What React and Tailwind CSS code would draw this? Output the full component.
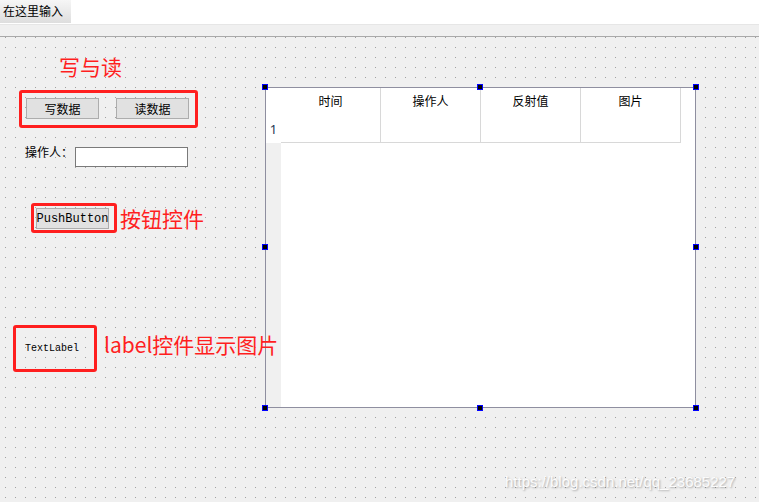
import React from "react";

const cjk = "font-['Microsoft_YaHei','Noto_Sans_CJK_SC',sans-serif]";
const mono = "font-['Liberation_Mono','Noto_Sans_CJK_SC',monospace]";

const Handle = ({ className }) => (
  <div className={`absolute w-[6px] h-[6px] bg-black border border-[#0000ff] ${className}`} />
);

const QtButton = ({ children, className = "" }) => (
  <div
    className={`w-[73px] h-[21px] shrink-0 flex items-center justify-center bg-[#e1e1e1] border border-[#adadad] text-[12px] text-black ${className}`}
  >
    {children}
  </div>
);

const columns = ["时间", "操作人", "反射值", "图片"];

export default function App() {
  return (
    <div className={`w-[759px] h-[502px] flex flex-col bg-[#f0f0f0] overflow-hidden ${cjk}`}>
      {/* menu bar */}
      <div className="h-[24px] shrink-0 bg-white flex">
        <div className="w-[71px] h-[23px] bg-gradient-to-b from-[#f6f6f6] to-[#dedede] text-[12px] leading-[22px] pl-[3px] text-black">
          在这里输入
        </div>
      </div>
      {/* toolbar strip */}
      <div className="h-[13px] shrink-0 bg-[#f0f0f0] border-t border-t-[#e6e6e6] border-b border-b-[#a9a9a9] box-border" />

      {/* form canvas */}
      <div className="relative flex-1 flex items-start bg-[#f0f0f0] bg-[image:conic-gradient(from_270deg_at_1px_1px,#a0a0a0_90deg,transparent_0)] bg-[size:10px_10px] bg-[position:5px_0px]">
        {/* left column */}
        <div className="relative z-10 w-[265px] shrink-0 flex flex-col items-start">
          <div className="mt-[19px] ml-[59px] text-[21px] leading-[21px] text-[#ff1f1f]">写与读</div>

          <div className="mt-[13px] ml-[19px] w-[179px] h-[38px] border-[3px] border-[#ff1f1f] rounded-[3px] flex items-start pl-[4px] pt-[5px] gap-[17px]">
            <QtButton>写数据</QtButton>
            <QtButton>读数据</QtButton>
          </div>

          <div className="mt-[17px] ml-[25px] flex items-start">
            <div className="w-[50px] text-[12px] leading-[14px] text-black">操作人：</div>
            <div className="mt-[2px] w-[113px] h-[20px] bg-white border border-[#7a7a7a]" />
          </div>

          <div className="mt-[36px] ml-[31px] flex items-center">
            <div className="w-[86px] h-[30px] border-[3px] border-[#ff1f1f] rounded-[3px] flex items-start pl-[2px] pt-[2px]">
              <QtButton className={`${mono} text-[10px]`}>PushButton</QtButton>
            </div>
            <div className="ml-[3px] text-[21px] leading-[21px] text-[#ff1f1f] whitespace-nowrap">按钮控件</div>
          </div>

          <div className="mt-[92px] ml-[13px] flex items-start whitespace-nowrap">
            <div className="w-[84px] h-[47px] shrink-0 border-[3px] border-[#ff1f1f] rounded-[3px] flex items-center pl-[9px]">
              <span className={`${mono} text-[10px] text-black`}>TextLabel</span>
            </div>
            <div className="ml-[7px] mt-[9px] text-[21px] leading-[21px] text-[#ff1f1f] whitespace-nowrap">label控件显示图片</div>
          </div>
        </div>

        {/* table widget */}
        <div className="relative mt-[50px] w-[431px] h-[321px] shrink-0 border border-[#8f8fa0] flex flex-col">
          <div className="h-[55px] flex bg-white">
            <div className="w-[15px] shrink-0 pt-[33px] text-center text-[13px] leading-[16px] text-[#1c3552] font-['Segoe_UI','Noto_Sans',sans-serif]">
              1
            </div>
            {columns.map((c) => (
              <div
                key={c}
                className="w-[100px] shrink-0 border-r border-b border-[#d8d8d8] text-center text-[12px] leading-[16px] pt-[5px] text-black"
              >
                {c}
              </div>
            ))}
            <div className="flex-1" />
          </div>
          <div className="flex-1 flex">
            <div className="w-[15px] shrink-0 bg-[#f0f0f0]" />
            <div className="flex-1 bg-white" />
          </div>

          <Handle className="-left-[4px] -top-[4px]" />
          <Handle className="left-[211px] -top-[4px]" />
          <Handle className="-right-[4px] -top-[4px]" />
          <Handle className="-left-[4px] top-[156px]" />
          <Handle className="-right-[4px] top-[156px]" />
          <Handle className="-left-[4px] -bottom-[4px]" />
          <Handle className="left-[211px] -bottom-[4px]" />
          <Handle className="-right-[4px] -bottom-[4px]" />
        </div>

        {/* watermark */}
        <div className="absolute left-[505px] top-[436px] text-[15px] leading-[18px] text-white/90 font-['Liberation_Sans',sans-serif] [text-shadow:1px_1px_2px_rgba(0,0,0,0.3)]">
          https://blog.csdn.net/qq_23685227
        </div>
      </div>
    </div>
  );
}
